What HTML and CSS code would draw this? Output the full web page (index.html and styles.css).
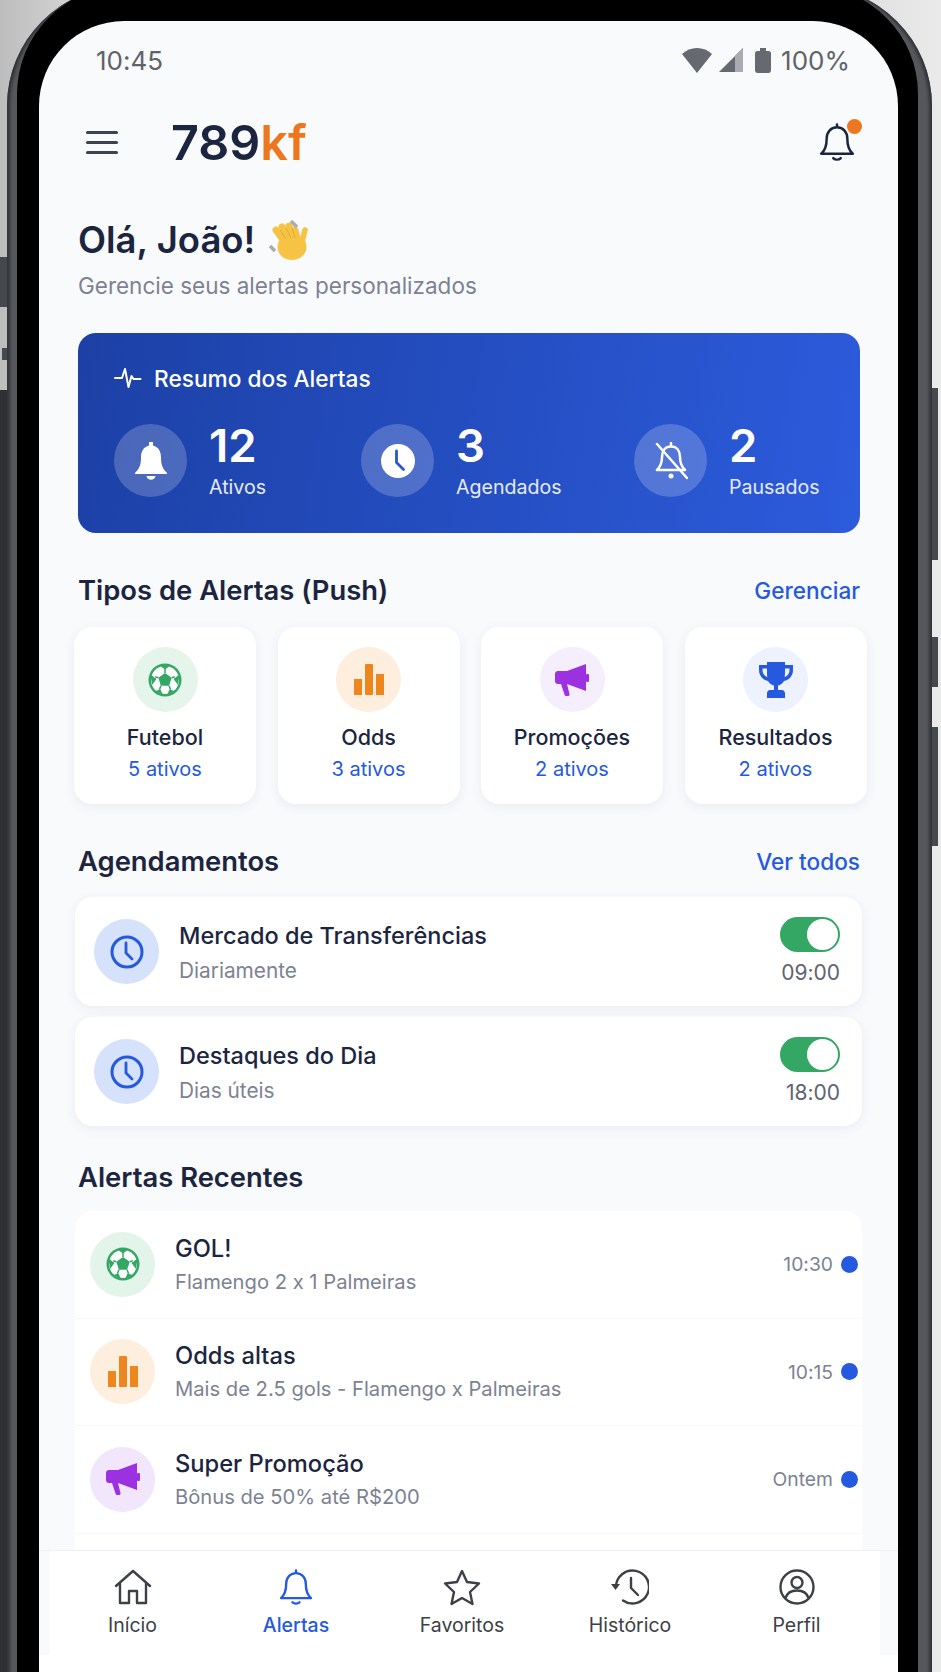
FILE: index.html
```html
<!DOCTYPE html>
<html lang="pt-BR">
<head>
    <meta charset="UTF-8">
    <meta name="viewport" content="width=device-width, initial-scale=1.0">
    <title>789kf - Alertas</title>
    <link rel="stylesheet" href="styles.css">
</head>
<body>

    <svg class="defs" width="0" height="0">
        <symbol id="ball" viewBox="0 0 34 34">
            <circle cx="17" cy="17" r="16.500" fill="#34a765"/>
            <circle cx="17" cy="17" r="14" fill="#fff"/>
            <path fill="#34a765" d="M17 10l6.700 4.800-2.600 7.900h-8.200l-2.600-7.900z"/>
            <g fill="#34a765">
                <path d="M11.500 2.500h11L17 6.500z"/>
                <path d="M31.500 11.500 30 22l-4.500-6z"/>
                <path d="M27 28 19 32l2.500-5.500z"/>
                <path d="M7 28l8 4-2.500-5.500z"/>
                <path d="M2.500 11.500 4 22l4.500-6z"/>
            </g>
            <path fill="none" stroke="#34a765" stroke-width="1.500" d="M17 6v4M23.700 14.800l3-1M21.100 22.700l1.500 4M12.900 22.700l-1.500 4M10.300 14.800l-3-1"/>
        </symbol>
        <symbol id="bars" viewBox="0 0 30 31">
            <rect x="0" y="15" width="8" height="16" fill="#ee861e"/>
            <rect x="11" y="0" width="8" height="31" rx="1" fill="#ee861e"/>
            <rect x="22" y="10" width="8" height="21" fill="#ee861e"/>
        </symbol>
        <symbol id="mega" viewBox="0 0 34 32">
            <path fill="#9b31e0" d="M31 0v27L12 20H3c-1.700 0-3-1.300-3-3v-7c0-1.700 1.300-3 3-3h9z"/>
            <path fill="#9b31e0" d="M6 20h6l2.500 10c.3 1.500-.7 2-2 2h-1c-1 0-1.700-.5-2-1.500z"/>
            <rect x="31" y="10" width="3" height="8" rx="1" fill="#9b31e0"/>
        </symbol>
        <symbol id="trophy" viewBox="0 0 34 36">
            <path fill="#2459e0" d="M8 0h18v3h8v5c0 6-4 10-9 11-1.500 2.500-3.500 4-6 4.500V28h4c1.500 0 3 1.500 3 3v5H8v-5c0-1.500 1.500-3 3-3h4v-4.500c-2.500-.5-4.500-2-6-4.500C4 18 0 14 0 8V3h8zM3.500 6.500V8c0 3.500 2 6 4.800 7.200C8 13 8 11 8 6.500zM30.500 6.500H26c0 4.500 0 6.500-.3 8.700C28.500 14 30.500 11.500 30.500 8z"/>
        </symbol>
        <symbol id="clock" viewBox="0 0 34 34">
            <circle cx="17" cy="17" r="15" fill="none" stroke="#2459e0" stroke-width="3"/>
            <path fill="none" stroke="#2459e0" stroke-width="2.800" stroke-linecap="round" stroke-linejoin="round" d="M16 8v10l6 6"/>
        </symbol>
        <symbol id="bell" viewBox="0 0 24 24">
            <path fill="none" stroke="currentColor" stroke-width="1.500" stroke-linejoin="round" stroke-linecap="round" d="M12 1.500v1.700M12 3.200c-3.800 0-6.200 3-6.200 6.800 0 4.500-.8 7-3.300 9h19c-2.500-2-3.300-4.500-3.300-9 0-3.800-2.400-6.800-6.200-6.800zM9.800 21.700c1.200 1 3.200 1 4.400 0"/>
        </symbol>
    </svg>

    <div class="side_btn left_one"></div>
    <div class="side_btn left_two"></div>
    <div class="side_btn left_three"></div>
    <div class="side_btn right_one"></div>
    <div class="side_btn right_two"></div>
    <div class="side_btn right_three"></div>

    <div class="phone">
        <div class="bezel">
            <div class="screen">

                <div class="status_bar">
                    <span>10:45</span>
                    <div class="status_icons">
                        <svg class="wifi" width="30" height="25" viewBox="0 0 30 25"><path fill="#66696f" d="M0 6C8-2 22-2 30 6L15 25z"/></svg>
                        <svg class="signal" width="24" height="24" viewBox="0 0 24 24"><path fill="#66696f" d="M24 0v24H0z"/><path fill="#a9abb0" d="M16 7.500 24 0v24h-8z"/></svg>
                        <svg class="battery" width="16" height="25" viewBox="0 0 16 25"><path fill="#66696f" d="M5 0h6v3h2.500c1.500 0 2.500 1 2.500 2.500V22c0 2-1 3-2.500 3h-11C1 25 0 24 0 22V5.500C0 4 1 3 2.500 3H5z"/></svg>
                        <span>100%</span>
                    </div>
                </div>

                <div class="top_bar">
                    <div class="burger"><i></i><i></i><i></i></div>
                    <div class="logo">789<span>kf</span></div>
                    <div class="top_bell">
                        <svg width="40" height="40"><use href="#bell"/></svg>
                        <div class="top_dot"></div>
                    </div>
                </div>

                <div class="content">
                    <h1 class="hello">Olá, João!
                        <svg width="60" height="50" viewBox="0 0 60 50">
                            <g fill="none" stroke="#f6c344" stroke-width="7" stroke-linecap="round">
                                <path d="M26 30 15 15"/>
                                <path d="M29 28 21 12"/>
                                <path d="M33 27 28 11"/>
                                <path d="M37 28 34 15"/>
                                <path d="M40 31 44 15" stroke-width="5.500"/>
                            </g>
                            <ellipse cx="31" cy="32" rx="14.500" ry="13" fill="#f6c344"/>
                            <path d="M19 15l6 9M25 13l5 10M31 13l3 10" stroke="#e2a92f" stroke-width="1" fill="none"/>
                            <path d="M30 6l6 6M9 31l5 5" stroke="#a9acb3" stroke-width="3.500" fill="none"/>
                        </svg>
                    </h1>
                    <p class="hello_sub">Gerencie seus alertas personalizados</p>

                    <div class="resume">
                        <div class="resume_title">
                            <svg width="28" height="22" viewBox="0 0 28 22"><path fill="none" stroke="#fff" stroke-width="2" stroke-linecap="round" stroke-linejoin="round" d="M1 11h7l3-9 3.500 18 3-11 2 3h7"/></svg>
                            Resumo dos Alertas
                        </div>
                        <div class="stats">
                            <div class="stat">
                                <div class="stat_round">
                                    <svg width="34" height="38" viewBox="0 0 34 38"><path fill="#fff" d="M15 0h4v3.500c5.500 1.500 8 6 8 12 0 7 1.500 11 6 15.500v1H1v-1c4.500-4.500 6-8.500 6-15.500 0-6 2.500-10.500 8-12zM12.500 34h9c-.5 5-8.500 5-9 0z"/></svg>
                                </div>
                                <div><b>12</b><span>Ativos</span></div>
                            </div>
                            <div class="stat">
                                <div class="stat_round">
                                    <svg width="36" height="36" viewBox="0 0 36 36"><circle cx="18" cy="18" r="17" fill="#fff"/><path fill="none" stroke="#2a56c8" stroke-width="2.800" stroke-linecap="round" stroke-linejoin="round" d="M16.500 8v11.500l7 7"/></svg>
                                </div>
                                <div><b>3</b><span>Agendados</span></div>
                            </div>
                            <div class="stat">
                                <div class="stat_round">
                                    <svg width="34" height="38" viewBox="0 0 34 38"><g fill="none" stroke="#fff" stroke-width="2.500" stroke-linecap="round" stroke-linejoin="round"><path d="M17 1v3.500c-6 0-9 4.500-9 10.500 0 6-1 9-5 13h28c-4-4-5-7-5-13 0-6-3-10.500-9-10.500"/><path d="M3 2l30 34"/></g><circle cx="17" cy="34" r="2.500" fill="#fff"/></svg>
                                </div>
                                <div><b>2</b><span>Pausados</span></div>
                            </div>
                        </div>
                    </div>

                    <div class="section_head">
                        <h2>Tipos de Alertas (Push)</h2>
                        <a>Gerenciar</a>
                    </div>
                    <div class="types">
                        <div class="type">
                            <div class="round green"><svg width="34" height="34"><use href="#ball"/></svg></div>
                            <strong>Futebol</strong>
                            <span>5 ativos</span>
                        </div>
                        <div class="type">
                            <div class="round orange"><svg width="30" height="31"><use href="#bars"/></svg></div>
                            <strong>Odds</strong>
                            <span>3 ativos</span>
                        </div>
                        <div class="type">
                            <div class="round purple"><svg width="34" height="32"><use href="#mega"/></svg></div>
                            <strong>Promoções</strong>
                            <span>2 ativos</span>
                        </div>
                        <div class="type">
                            <div class="round blue"><svg width="34" height="36"><use href="#trophy"/></svg></div>
                            <strong>Resultados</strong>
                            <span>2 ativos</span>
                        </div>
                    </div>

                    <div class="section_head">
                        <h2>Agendamentos</h2>
                        <a>Ver todos</a>
                    </div>
                    <div class="schedules">
                        <div class="schedule">
                            <div class="round sky"><svg width="34" height="34"><use href="#clock"/></svg></div>
                            <div class="row_text">
                                <strong>Mercado de Transferências</strong>
                                <span>Diariamente</span>
                            </div>
                            <div class="schedule_right">
                                <div class="toggle"><i></i></div>
                                <span>09:00</span>
                            </div>
                        </div>
                        <div class="schedule">
                            <div class="round sky"><svg width="34" height="34"><use href="#clock"/></svg></div>
                            <div class="row_text">
                                <strong>Destaques do Dia</strong>
                                <span>Dias úteis</span>
                            </div>
                            <div class="schedule_right">
                                <div class="toggle"><i></i></div>
                                <span>18:00</span>
                            </div>
                        </div>
                    </div>

                    <div class="section_head recent_head">
                        <h2>Alertas Recentes</h2>
                    </div>
                    <div class="recents">
                        <div class="recent">
                            <div class="round green"><svg width="34" height="34"><use href="#ball"/></svg></div>
                            <div class="row_text">
                                <strong>GOL!</strong>
                                <span>Flamengo 2 x 1 Palmeiras</span>
                            </div>
                            <div class="recent_time">10:30<i></i></div>
                        </div>
                        <div class="recent">
                            <div class="round orange"><svg width="30" height="31"><use href="#bars"/></svg></div>
                            <div class="row_text">
                                <strong>Odds altas</strong>
                                <span>Mais de 2.5 gols - Flamengo x Palmeiras</span>
                            </div>
                            <div class="recent_time">10:15<i></i></div>
                        </div>
                        <div class="recent">
                            <div class="round purple"><svg width="34" height="32"><use href="#mega"/></svg></div>
                            <div class="row_text">
                                <strong>Super Promoção</strong>
                                <span>Bônus de 50% até R$200</span>
                            </div>
                            <div class="recent_time">Ontem<i></i></div>
                        </div>
                    </div>
                </div>

                <div class="bottom">
                    <div class="nav">
                        <div class="nav_item">
                            <svg width="38" height="36" viewBox="0 0 38 36"><path fill="none" stroke="currentColor" stroke-width="2.400" stroke-linecap="round" stroke-linejoin="round" d="M2 17 19 2l17 15M6 14v20h9V22h8v12h9V14"/></svg>
                            Início
                        </div>
                        <div class="nav_item active">
                            <svg width="38" height="38"><use href="#bell"/></svg>
                            Alertas
                        </div>
                        <div class="nav_item">
                            <svg width="38" height="36" viewBox="0 0 38 36"><path fill="none" stroke="currentColor" stroke-width="2.400" stroke-linejoin="round" d="M19 2l5 11 12 1.500-9 8.500 2.500 12L19 29 8.500 35 11 23l-9-8.500L14 13z"/></svg>
                            Favoritos
                        </div>
                        <div class="nav_item">
                            <svg width="38" height="36" viewBox="0 0 38 36"><g fill="none" stroke="currentColor" stroke-width="2.400" stroke-linecap="round" stroke-linejoin="round"><path d="M5 18A16.500 16.500 0 1 1 12 31.500"/><path d="M20 9v10l7 7"/></g><path fill="currentColor" d="M0 15h9l-4.500 6z"/></svg>
                            Histórico
                        </div>
                        <div class="nav_item">
                            <svg width="36" height="36" viewBox="0 0 36 36"><g fill="none" stroke="currentColor" stroke-width="2.400" stroke-linecap="round"><circle cx="18" cy="18" r="16.500"/><circle cx="18" cy="13.500" r="5.500"/><path d="M6.500 29c1.500-5 6-7.500 11.500-7.500S28 24 29.500 29"/></g></svg>
                            Perfil
                        </div>
                    </div>
                    <div class="bottom_end"></div>
                </div>

            </div>
        </div>
    </div>

</body>
</html>
```

FILE: styles.css
```css
* {
    box-sizing: border-box;
}

body {
    overflow: hidden;
    margin: 0;
    height: 1672px;
    font-family: Inter, "Liberation Sans", sans-serif;
    font-feature-settings: "calt" 0;
    color: #1c2540;
    background: linear-gradient(90deg, #bdbdbd 0, #d4d4d4 8%, #dedede 90%, #eaeaea 100%);
}

.defs {
    position: absolute;
}

/* phone frame */
.phone {
    width: 925px;
    height: 1700px;
    margin: -14px 0 0 7px;
    padding: 0 14px 0 10px;
    border-radius: 120px 120px 0 0;
    background: #55575b;
    box-shadow: inset 3px 0 3px #333538, inset -3px 0 3px #333538;
}

.bezel {
    height: 100%;
    padding: 35px 20px 0 22px;
    border-radius: 108px 108px 0 0;
    background: #000;
}

.screen {
    width: 859px;
    height: 1651px;
    overflow: hidden;
    border-radius: 85px 85px 0 0;
    background: #f9fafc;
}

.side_btn {
    position: absolute;
    width: 7px;
    background: #45484c;
}

.left_one { left: 0; top: 257px; height: 50px; }
.left_two { left: 2px; top: 348px; height: 12px; width: 5px; }
.left_three { left: 0; top: 390px; height: 1282px; background: #2e3033; }
.right_one { right: 3px; top: 388px; height: 172px; width: 6px; }
.right_two { right: 3px; top: 637px; height: 50px; width: 6px; }
.right_three { right: 3px; top: 727px; height: 119px; width: 6px; }

/* status bar */
.status_bar {
    display: flex;
    justify-content: space-between;
    align-items: center;
    height: 78px;
    padding: 0 48px 0 57px;
    font-size: 26px;
    color: #5f6368;
}

.status_icons {
    display: flex;
    align-items: center;
}

.signal {
    margin-left: 7px;
}

.battery {
    margin-left: 12px;
}

.status_icons span {
    margin-left: 10px;
}

.top_bar {
    display: flex;
    align-items: center;
    height: 86px;
    padding: 0 41px 0 47px;
}

.burger {
    display: flex;
    flex-direction: column;
    gap: 7px;
    width: 32px;
}

.burger i {
    height: 3px;
    border-radius: 2px;
    background: #3a4254;
}

.logo {
    margin-left: 53px;
    font-size: 48.500px;
    font-weight: 600;
}

.logo span {
    color: #ee761f;
}

.top_bell {
    position: relative;
    display: flex;
    margin-left: auto;
    color: #1c2540;
}

.top_dot {
    position: absolute;
    top: -3px;
    right: -5px;
    width: 15px;
    height: 15px;
    border-radius: 50%;
    background: #ee761f;
}

/* content */
.content {
    padding: 0 38px 0 39px;
}

.hello {
    display: flex;
    align-items: center;
    height: 44px;
    margin: 33px 0 0;
    font-size: 36.500px;
    font-weight: 600;
    line-height: 44px;
}

.hello svg {
    margin-left: 6px;
}

.hello_sub {
    margin: 10px 0 0;
    font-size: 22.500px;
    line-height: 28px;
    color: #7d8292;
}

.resume {
    height: 200px;
    margin-top: 33px;
    padding: 30px 0 0 36px;
    border-radius: 18px;
    color: #fff;
    background: linear-gradient(100deg, #1c40a5 0, #2c5bdc 100%);
}

.resume_title {
    display: flex;
    align-items: center;
    gap: 12px;
    height: 30px;
    font-size: 22.700px;
    font-weight: 500;
}

.stats {
    display: grid;
    grid-template-columns: 247px 273px 1fr;
    margin-top: 30px;
}

.stat {
    display: flex;
    align-items: center;
    gap: 22px;
}

.stat_round {
    display: flex;
    justify-content: center;
    align-items: center;
    width: 73px;
    height: 73px;
    margin-bottom: 2px;
    border-radius: 50%;
    background: rgba(255, 255, 255, 0.2);
}

.stat b {
    display: block;
    font-size: 45.500px;
    font-weight: 600;
    line-height: 46px;
}

.stat span {
    display: block;
    margin-top: 5px;
    font-size: 19.600px;
    line-height: 26px;
    color: #e6ebfa;
}

.section_head {
    display: flex;
    justify-content: space-between;
    align-items: center;
    height: 34px;
    margin-top: 40px;
}

.section_head h2 {
    margin: 0;
    font-size: 27.400px;
    font-weight: 600;
}

.section_head a {
    font-size: 22.600px;
    font-weight: 500;
    color: #2459e0;
}

.types {
    display: grid;
    grid-template-columns: repeat(4, 182px);
    gap: 21.500px;
    margin: 20px 0 0 -4px;
}

.type {
    display: flex;
    flex-direction: column;
    align-items: center;
    height: 177px;
    padding-top: 20px;
    border-radius: 18px;
    background: #fff;
    box-shadow: 0 3px 12px rgba(40, 60, 120, 0.08);
}

.type strong {
    margin-top: 11px;
    font-size: 21.500px;
    font-weight: 500;
    line-height: 28px;
}

.type span {
    margin-top: 4px;
    font-size: 20px;
    line-height: 28px;
    color: #2459e0;
}

.round {
    display: flex;
    flex: none;
    justify-content: center;
    align-items: center;
    width: 65px;
    height: 65px;
    border-radius: 50%;
}

.green { background: #e3f4ea; }
.orange { background: #fdeedd; }
.purple { background: #f1e6fb; }
.sky { background: #d6e2fb; }
.blue { background: #edf2fe; }
.type .purple { background: #f5eefd; }
.type .green { background: #e6f5ec; }

.schedules {
    display: flex;
    flex-direction: column;
    gap: 11px;
    margin: 19px -2px 0 -3px;
}

.schedule {
    display: flex;
    align-items: center;
    height: 109px;
    padding: 0 22px 0 19px;
    border-radius: 18px;
    background: #fff;
    box-shadow: 0 3px 12px rgba(40, 60, 120, 0.07);
}

.row_text {
    display: flex;
    flex-direction: column;
    margin-left: 20px;
    padding-top: 2px;
}

.row_text strong {
    font-size: 23.500px;
    font-weight: 500;
    line-height: 32px;
}

.row_text span {
    margin-top: 5px;
    font-size: 20.800px;
    line-height: 28px;
    color: #7d8292;
}

.schedule_right {
    display: flex;
    flex-direction: column;
    align-items: flex-end;
    margin-left: auto;
    padding-top: 1px;
    font-size: 21px;
    color: #5f6472;
}

.schedule_right span {
    margin-top: 7px;
    line-height: 28px;
}

.toggle {
    display: flex;
    justify-content: flex-end;
    width: 60px;
    height: 35px;
    padding: 2px;
    border-radius: 18px;
    background: #34a765;
}

.toggle i {
    width: 31px;
    height: 31px;
    border-radius: 50%;
    background: #fff;
}

.recent_head {
    margin-top: 34px;
}

.recents {
    height: 339px;
    margin: 17px -2px 0 -3px;
    border-radius: 18px 18px 0 0;
    background: #fff;
}

.recent {
    display: flex;
    align-items: center;
    height: 107.500px;
    padding: 0 4px 0 15px;
    border-bottom: 1px solid #f7f8fb;
}

.recent .row_text {
    padding-top: 0;
}

.recent .row_text strong {
    font-size: 23.700px;
}

.recent .row_text span {
    margin-top: 3px;
    font-size: 20.200px;
}

.recent_time {
    display: flex;
    align-items: center;
    gap: 8px;
    margin-left: auto;
    font-size: 19.300px;
    color: #7d8292;
}

.recent_time i {
    width: 17px;
    height: 17px;
    border-radius: 50%;
    background: #2459e0;
}

/* bottom nav */
.bottom {
    border-top: 1px solid #eef0f5;
}

.nav {
    display: grid;
    grid-template-columns: 165px 162px 170px 166px 1fr;
    height: 104px;
    margin: 0 18px 0 11px;
    background: #fff;
}

.nav_item {
    display: flex;
    flex-direction: column;
    align-items: center;
    gap: 7px;
    padding-top: 17px;
    font-size: 19.500px;
    color: #3d4046;
}

.nav_item svg {
    height: 38px;
}

.nav_item.active {
    font-weight: 500;
    color: #2459e0;
}

.bottom_end {
    height: 30px;
    background: #fff;
}
```
